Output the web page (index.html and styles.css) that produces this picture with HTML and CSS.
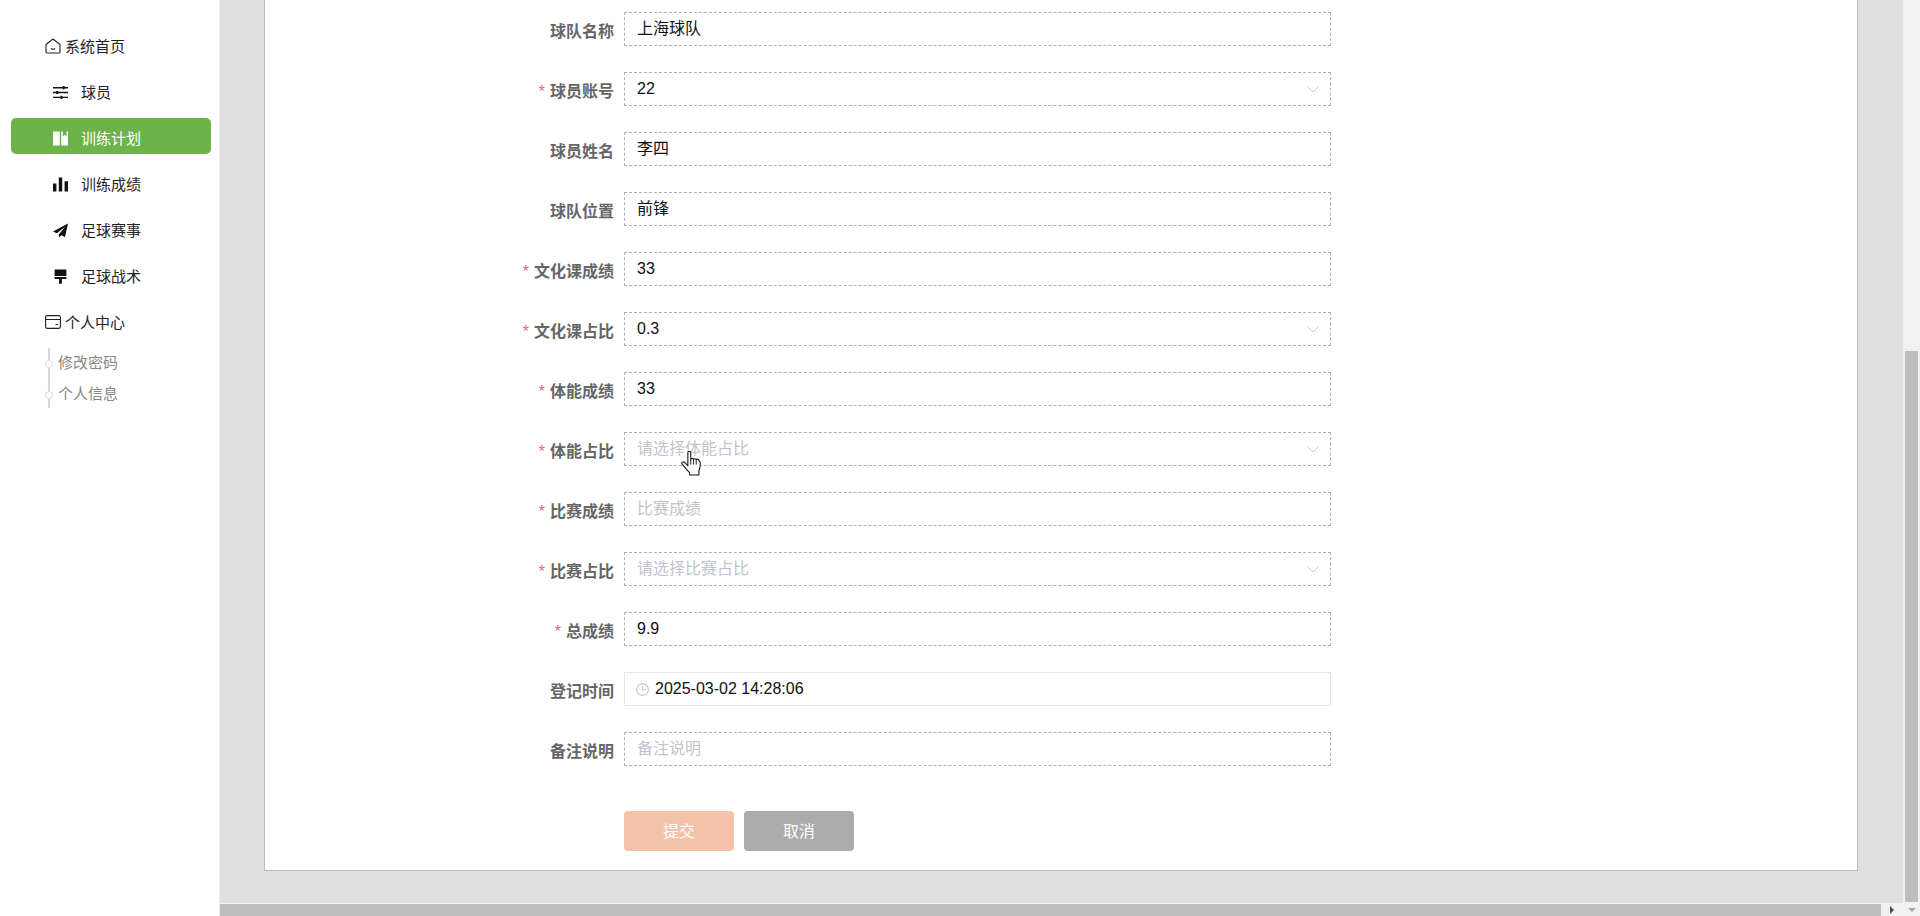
FILE: index.html
```html
<!DOCTYPE html>
<html lang="zh">
<head>
<meta charset="utf-8">
<title>训练成绩</title>
<link rel="stylesheet" href="styles.css">
</head>
<body>
<div class="app">
  <nav class="sidebar">
    <div class="nav-item top">
      <svg class="top-icon" viewBox="0 0 16 16"><path d="M8 1 L15 6.5 V14 a1 1 0 0 1-1 1 H2 a1 1 0 0 1-1-1 V6.5 Z" fill="none" stroke="#222" stroke-width="1.1" stroke-linejoin="round"/><path d="M6 10.5 q2 1.5 4 0" fill="none" stroke="#222" stroke-width="1.1"/></svg>
      <span>系统首页</span>
    </div>
    <div class="nav-item sub">
      <svg class="sub-icon" viewBox="0 0 14 14"><path d="M0 2.5H14M0 7H14M0 11.5H14" stroke="#111" stroke-width="1.3"/><path d="M9 1h1.8v3H9zM3 5.5h1.8v3H3zM7 10h1.8v3H7z" fill="#111"/></svg>
      <span>球员</span>
    </div>
    <div class="nav-item sub active">
      <svg class="sub-icon" viewBox="0 0 14 14"><path d="M0 0.5H6.3V13.5H0ZM7.7 0.5H9.2V5L11 3.8 12.6 5V0.5H14V13.5H7.7Z" fill="#fff"/></svg>
      <span>训练计划</span>
    </div>
    <div class="nav-item sub">
      <svg class="sub-icon" viewBox="0 0 14 14"><path d="M0 6H3.2V13.5H0ZM5.4 0.5H8.6V13.5H5.4ZM10.8 4H14V13.5H10.8Z" fill="#111"/></svg>
      <span>训练成绩</span>
    </div>
    <div class="nav-item sub">
      <svg class="sub-icon" viewBox="0 0 14 14"><path d="M14 0.5 L0 8 L3.6 9.6 L11.5 3.5 L5.5 10.4 V13.5 L7.8 11.4 L11.2 13 Z" fill="#111"/></svg>
      <span>足球赛事</span>
    </div>
    <div class="nav-item sub">
      <svg class="sub-icon" viewBox="0 0 14 14"><path d="M1.5 0.5H12.5V6.5H1.5ZM1.5 7.5H12.5V9.3H8.3V13.5L5.7 14V9.3H1.5Z" fill="#111"/></svg>
      <span>足球战术</span>
    </div>
    <div class="nav-item top">
      <svg class="top-icon" viewBox="0 0 16 16"><rect x="0.6" y="1.6" width="14.8" height="12.8" rx="1.6" fill="none" stroke="#222" stroke-width="1.1"/><path d="M0.6 5.5H15.4M10.5 10.5H13" stroke="#222" stroke-width="1.1"/></svg>
      <span>个人中心</span>
    </div>
    <div class="tree">
      <div class="tree-item">修改密码</div>
      <div class="tree-item">个人信息</div>
    </div>
  </nav>

  <main class="main">
    <section class="card">
      <div class="row"><div class="label">球队名称</div><div class="field">上海球队</div></div>
      <div class="row"><div class="label"><i>*</i>球员账号</div><div class="field">22<svg class="chev" viewBox="0 0 12 7"><path d="M0.5 0.5 L6 6 L11.5 0.5"/></svg></div></div>
      <div class="row"><div class="label">球员姓名</div><div class="field">李四</div></div>
      <div class="row"><div class="label">球队位置</div><div class="field">前锋</div></div>
      <div class="row"><div class="label"><i>*</i>文化课成绩</div><div class="field">33</div></div>
      <div class="row"><div class="label"><i>*</i>文化课占比</div><div class="field">0.3<svg class="chev" viewBox="0 0 12 7"><path d="M0.5 0.5 L6 6 L11.5 0.5"/></svg></div></div>
      <div class="row"><div class="label"><i>*</i>体能成绩</div><div class="field">33</div></div>
      <div class="row"><div class="label"><i>*</i>体能占比</div><div class="field empty">请选择体能占比<svg class="chev" viewBox="0 0 12 7"><path d="M0.5 0.5 L6 6 L11.5 0.5"/></svg></div></div>
      <div class="row"><div class="label"><i>*</i>比赛成绩</div><div class="field empty">比赛成绩</div></div>
      <div class="row"><div class="label"><i>*</i>比赛占比</div><div class="field empty">请选择比赛占比<svg class="chev" viewBox="0 0 12 7"><path d="M0.5 0.5 L6 6 L11.5 0.5"/></svg></div></div>
      <div class="row"><div class="label"><i>*</i>总成绩</div><div class="field">9.9</div></div>
      <div class="row"><div class="label">登记时间</div><div class="field date"><svg class="clock" viewBox="0 0 12 12"><circle cx="6" cy="6" r="5.4" fill="none" stroke="#c0c4cc"/><path d="M6 2.8V6.3H9" fill="none" stroke="#c0c4cc"/></svg>2025-03-02 14:28:06</div></div>
      <div class="row"><div class="label">备注说明</div><div class="field empty">备注说明</div></div>
      <div class="actions">
        <div class="btn submit">提交</div>
        <div class="btn cancel">取消</div>
      </div>
    </section>
  </main>

  <div class="vscroll"><div class="vthumb"></div></div>
  <div class="hscroll"><div class="hthumb"></div><div class="harrow"><span class="tri-right"></span></div></div>
  <div class="corner"><span class="tri-down"></span></div>
</div>
<svg class="cursor" viewBox="0 0 20 24"><path d="M6.5 1.6 a1.4 1.4 0 0 1 2.8 0 V8.4 a1.3 1.3 0 0 1 2.6 0.2 a1.3 1.3 0 0 1 2.6 0.3 a1.3 1.3 0 0 1 2.6 0.5 c0.9 0.3 1.4 1 1.4 2 c0 3.2 -0.4 5.5 -1.4 7.6 V23 H8.2 V20.8 C6 18.5 3.5 15.5 1 12.6 c-1 -1.4 1 -3 2.4 -1.6 L6.5 14 Z" fill="#fff" stroke="#111" stroke-width="1" stroke-linejoin="round"/><path d="M9.3 8.4V13M11.9 8.6V13M14.5 8.9V13" stroke="#111" stroke-width="0.9" fill="none"/></svg>
</body>
</html>
```

FILE: styles.css
```css
* { box-sizing: border-box; }
html, body { margin: 0; height: 100%; overflow: hidden; }
body {
  font-family: "Liberation Sans", "Noto Sans CJK SC", sans-serif;
  font-size: 16px;
  color: #000;
  background: #e0e0e0;
}
.app {
  display: grid;
  grid-template-columns: 220px 1fr 17px;
  grid-template-rows: 1fr 12px;
  height: 916px;
  width: 1920px;
}
.sidebar {
  grid-row: 1 / 3;
  grid-column: 1;
  background: #fff;
  padding: 26px 8px 0 11px;
  border-right: 1px solid #e8e8e8;
  font-size: 15px;
}
.nav-item {
  display: flex;
  align-items: center;
  height: 36px;
  margin-bottom: 10px;
  padding-top: 2px;
  color: #222;
  border-radius: 5px;
}
.nav-item.top { padding-left: 34px; gap: 4px; }
.nav-item.sub { padding-left: 42px; gap: 13px; }
.nav-item.active { background: #6eb34a; color: #fff; }
.top-icon { width: 16px; height: 16px; flex: none; margin-top: 2px; }
.sub-icon { width: 15px; height: 15px; flex: none; margin-top: 2px; }
.tree {
  position: relative;
  margin: 0 0 0 37px;
  height: 60px;
  border-left: 2px solid #d8d8d8;
  padding-left: 8px;
  font-size: 15px;
  color: #888;
}
.tree-item {
  position: relative;
  height: 31px;
  line-height: 30px;
}
.tree-item::before {
  content: "";
  position: absolute;
  left: -13px;
  top: 12px;
  width: 6px;
  height: 6px;
  border-radius: 50%;
  background: #fff;
  border: 1px solid #dedede;
}
.main {
  grid-row: 1;
  grid-column: 2;
  padding: 0 45px 0 44px;
  overflow: hidden;
  border-bottom: 1px solid #f0f0f0;
}
.card {
  height: 871px;
  background: #fff;
  border: 1px solid #bdbdbd;
  border-top: 0;
  padding-top: 12px;
}
.row {
  display: flex;
  height: 34px;
  margin-bottom: 26px;
}
.label {
  width: 359px;
  padding-right: 10px;
  text-align: right;
  font-weight: 700;
  color: #666;
  line-height: 40px;
  white-space: nowrap;
}
.label i {
  font-style: normal;
  font-weight: 400;
  color: #e46a6a;
  margin-right: 5px;
}
.field {
  position: relative;
  width: 707px;
  height: 34px;
  border: 1px dashed #b0b0b0;
  padding-left: 12px;
  line-height: 32px;
  color: #111;
  white-space: nowrap;
}
.field.empty { color: #c0c4cc; }
.field.date { border: 1px solid #e6e6e6; display: flex; align-items: center; padding-left: 11px; }
.clock { width: 13px; height: 13px; margin-right: 6px; flex: none; }
.chev {
  position: absolute;
  right: 11px;
  top: 13px;
  width: 12px;
  height: 7px;
  fill: none;
  stroke: #c8cbd1;
  stroke-width: 1;
}
.actions {
  display: flex;
  gap: 10px;
  padding-left: 359px;
  margin-top: 45px;
}
.btn {
  width: 110px;
  height: 40px;
  border-radius: 4px;
  color: #fff;
  text-align: center;
  line-height: 41px;
}
.submit { background: #f4c2a8; }
.cancel { background: #ababab; }
.vscroll {
  grid-row: 1;
  grid-column: 3;
  background: #f1f1f1;
  padding: 351px 2px 2px;
}
.vthumb { height: 100%; background: #bdbdbd; }
.hscroll {
  grid-row: 2;
  grid-column: 2;
  display: flex;
  background: #f1f1f1;
}
.hthumb { flex: 1; background: #bdbdbd; }
.harrow {
  width: 22px;
  display: flex;
  align-items: center;
  justify-content: center;
}
.tri-right {
  border-left: 4px solid #505050;
  border-top: 4px solid transparent;
  border-bottom: 4px solid transparent;
}
.corner {
  grid-row: 2;
  grid-column: 3;
  background: #f1f1f1;
  display: flex;
  align-items: center;
  justify-content: center;
}
.tri-down {
  border-top: 4px solid #a3a3a3;
  border-left: 4px solid transparent;
  border-right: 4px solid transparent;
}
.cursor {
  position: absolute;
  left: 681px;
  top: 451px;
  width: 21px;
  height: 25px;
}
```
